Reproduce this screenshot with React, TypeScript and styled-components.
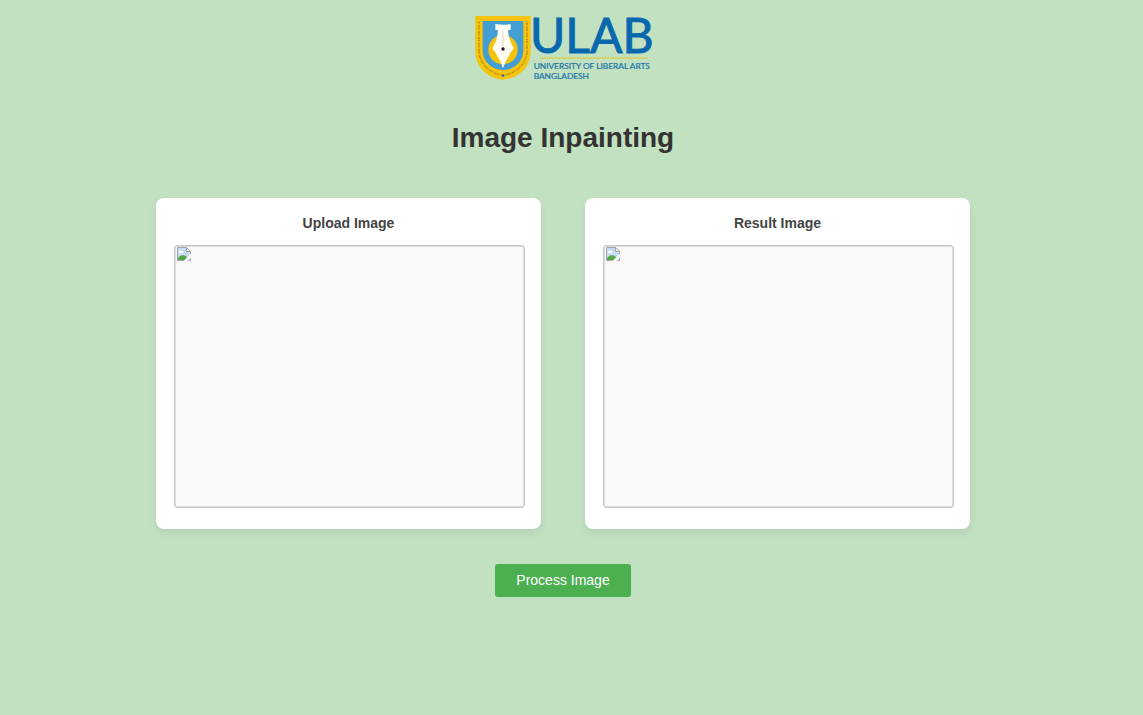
import React from "react";
import styled, { createGlobalStyle } from "styled-components";

const GlobalStyle = createGlobalStyle`
  * { box-sizing: border-box; }
  body {
    margin: 0;
    background: #c2e1c1;
    font-family: Arial, "Liberation Sans", sans-serif;
    color: #333;
  }
`;

const Page = styled.main`
  display: flex;
  flex-direction: column;
  align-items: center;
  padding: 14px 17px 32px 0;
`;

const LogoImage = styled.svg`
  display: block;
  width: 176px;
  height: 68px;
  overflow: visible;
`;

const Title = styled.h1`
  margin: 40px 0 44px;
  font-size: 28px;
  line-height: 32px;
  color: #333;
`;

const Panels = styled.div`
  display: flex;
  flex-wrap: wrap;
  justify-content: center;
  gap: 44px;
`;

const Card = styled.section`
  width: 385px;
  padding: 16px 16px 21px 18px;
  background: #fff;
  border-radius: 8px;
  box-shadow: 0 4px 8px rgba(0, 0, 0, 0.07);
`;

const CardTitle = styled.h2`
  margin: 0 0 13px;
  padding-right: 2px;
  font-size: 14px;
  line-height: 18px;
  text-align: center;
  color: #444;
`;

const Preview = styled.div`
  height: 263px;
  padding: 1px;
  background: #f9f9f9;
  border: 1px solid #c8c8c8;
  border-radius: 3px;
  box-shadow: inset 0 0 0 1px #dedede;
`;

const MissingIcon = styled.svg`
  display: block;
  width: 16px;
  height: 16px;
`;

const ProcessButton = styled.button`
  margin-top: 35px;
  padding: 0 21px 2px;
  height: 33px;
  border: 0;
  border-radius: 3px;
  background: #4caf50;
  color: #fff;
  font: 14px Arial, "Liberation Sans", sans-serif;
  cursor: pointer;
`;

function Logo() {
  return (
    <LogoImage viewBox="30 27 528 204" role="img" aria-label="ULAB University of Liberal Arts Bangladesh">
      <path d="M31 33H197V138C197 185 164 219 114 224C64 219 31 185 31 138Z" fill="#f6c30f" />
      <path
        d="M42 50V138C44 178 75 205 114 211C153 205 184 178 186 138V50"
        fill="none" stroke="#b8921a" strokeWidth="5" strokeDasharray="4 2 2 3 5 2"
      />
      <circle cx="114" cy="212" r="4" fill="#39799a" />
      <path d="M53 48H175V135C175 170 150 192 114 196C78 192 53 170 53 135Z" fill="#439fd3" />
      <circle cx="114" cy="134" r="44" fill="#f6c30f" />
      <path d="M91 57Q114 62 137 57V75H129C130 96 137 113 146 130C132 149 122 167 114 190C106 167 96 149 82 130C92 113 98 96 99 75H91Z" fill="#fffdf4" />
      <path d="M114 78V128" stroke="#c9c2ac" strokeWidth="2" />
      <circle cx="114" cy="132" r="5" fill="#171717" />
      <text x="195" y="144" fontFamily="Lato, sans-serif" fontSize="144" fill="#0868ad" stroke="#0868ad" strokeWidth="3">ULAB</text>
      <path d="M226 159H548" stroke="#d6cf55" strokeWidth="4" />
      <g fontFamily="Lato, sans-serif" fontSize="25" fill="#1672a8" stroke="#1672a8" strokeWidth="0.6">
        <text x="206" y="192">UNIVERSITY OF LIBERAL ARTS</text>
        <text x="206" y="222">BANGLADESH</text>
      </g>
    </LogoImage>
  );
}

function BrokenImage() {
  return (
    <MissingIcon viewBox="0 0 16 16" aria-hidden="true">
      <path d="M1.5 0.500H10.500L14.500 4.500V13.500H1.500Z" fill="#c6dcf4" stroke="#a5a5a5" />
      <path d="M10.500 0.500V4.500H14.500Z" fill="#fff" stroke="#a5a5a5" />
      <ellipse cx="5" cy="5" rx="2.500" ry="1.200" fill="#fff" />
      <path d="M2 13V11C4 8 8 7 11 10L10 13Z" fill="#55a645" />
      <path d="M7 14.500L15.500 6V10L11 14.500Z" fill="#f9f9f9" />
    </MissingIcon>
  );
}

function ImageCard({ title }: { title: string }) {
  return (
    <Card>
      <CardTitle>{title}</CardTitle>
      <Preview>
        <BrokenImage />
      </Preview>
    </Card>
  );
}

export default function App() {
  return (
    <>
      <GlobalStyle />
      <Page>
        <Logo />
        <Title>Image Inpainting</Title>
        <Panels>
          <ImageCard title="Upload Image" />
          <ImageCard title="Result Image" />
        </Panels>
        <ProcessButton type="button">Process Image</ProcessButton>
      </Page>
    </>
  );
}
